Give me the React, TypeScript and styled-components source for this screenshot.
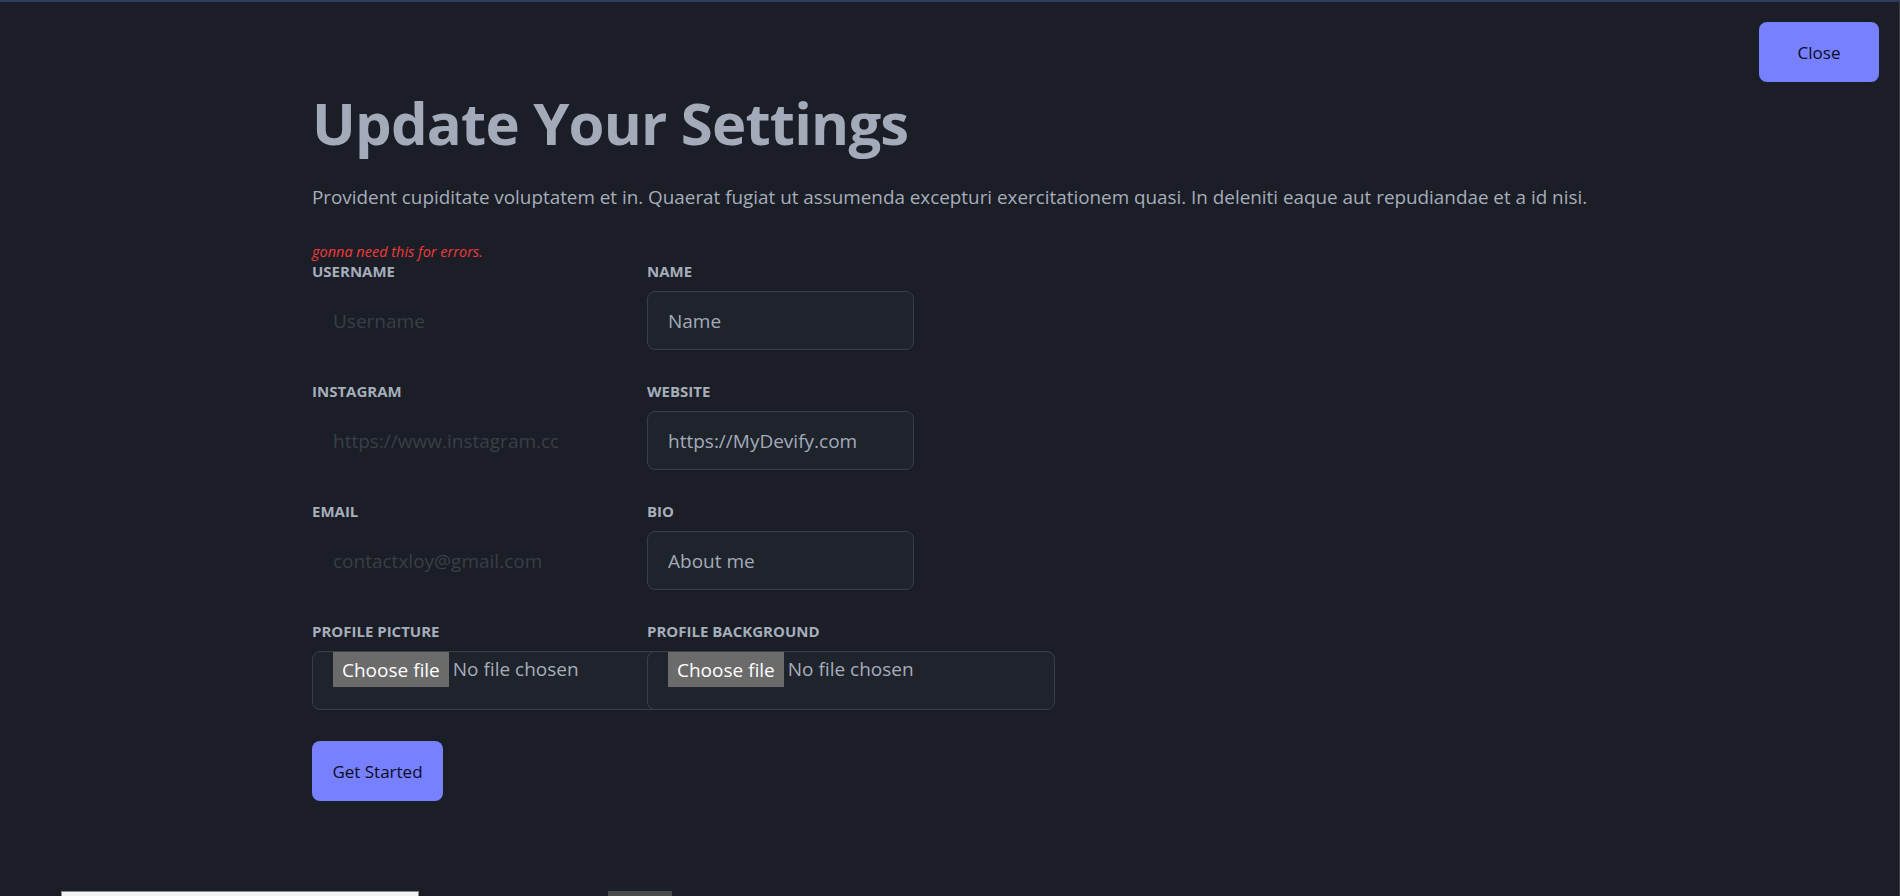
import React from "react";
import styled, { createGlobalStyle } from "styled-components";

const GlobalStyle = createGlobalStyle`
  * { box-sizing: border-box; }
  html, body { margin: 0; padding: 0; background: #1b1e26; }
  body { font-family: "Open Sans", "Noto Sans", sans-serif; color: #a6adbb; }
`;

const Page = styled.div`
  height: 896px;
  overflow: hidden;
  background: #1b1e26;
  border-top: 2px solid #2c3d61;
  border-right: 1px solid #3a3d44;
  display: flex;
  flex-direction: column;
`;

const TopBar = styled.div`
  display: flex;
  justify-content: flex-end;
  padding: 20px 20px 0;
`;

const PrimaryButton = styled.button<{ $w: number }>`
  width: ${(p) => p.$w}px;
  height: 60px;
  border: none;
  border-radius: 8px;
  background: #7780ff;
  color: #0b0c1f;
  font-family: "Open Sans", "Noto Sans", sans-serif;
  font-size: 17px;
  font-weight: 500;
  cursor: pointer;
  padding: 0;
`;

const Main = styled.main`
  margin: 11px 0 0 312px;
`;

const Title = styled.h1`
  margin: 0;
  font-size: 58px;
  line-height: 60px;
  font-weight: 700;
  color: #a3aab9;
  letter-spacing: -0.8px;
`;

const Lead = styled.p`
  margin: 30px 0 0;
  font-size: 18.85px;
  line-height: 28px;
  color: #a6adbb;
  white-space: nowrap;
`;

const ErrorText = styled.div`
  margin-top: 32px;
  font-size: 14.5px;
  line-height: 18px;
  font-style: italic;
  color: #f13b3b;
`;

const FormGrid = styled.div`
  display: grid;
  grid-template-columns: 335px 335px;
  row-gap: 31px;
`;

const Field = styled.div`
  display: flex;
  flex-direction: column;
  gap: 10px;
`;

const Label = styled.label`
  font-size: 15px;
  line-height: 20px;
  font-weight: 700;
  text-transform: uppercase;
  color: #a6adbb;
`;

const TextInput = styled.input<{ $ghost?: boolean }>`
  width: 267px;
  height: 59px;
  border-radius: 8px;
  font-family: "Open Sans", "Noto Sans", sans-serif;
  font-size: 19px;
  outline: none;
  padding: 0 20px;
  background: ${(p) => (p.$ghost ? "transparent" : "#1f232b")};
  border: 1px solid ${(p) => (p.$ghost ? "transparent" : "#3a3e47")};
  color: #a6adbb;
  &::placeholder {
    color: ${(p) => (p.$ghost ? "#393e47" : "#a3abba")};
  }
`;

const FileBox = styled.div`
  width: 408px;
  height: 59px;
  border: 1px solid #3a3e47;
  border-radius: 8px;
  background: #1f232b;
  display: flex;
  align-items: flex-start;
  padding-left: 20px;
  font-size: 19px;
`;

const ChooseButton = styled.span`
  height: 35px;
  padding: 0 9px;
  background: #6b6b6b;
  color: #ffffff;
  display: flex;
  align-items: center;
  margin-right: 4px;
`;

const NoFile = styled.span`
  line-height: 35px;
  color: #a6adbb;
`;

const SubmitRow = styled.div`
  margin-top: 31px;
`;

const Gallery = styled.div`
  margin-top: 90px;
  display: flex;
  align-items: flex-start;
  padding-left: 61px;
  gap: 189px;
`;

const Card = styled.div<{ $w: number; $bg: string; $border?: boolean }>`
  width: ${(p) => p.$w}px;
  height: 40px;
  background: ${(p) => p.$bg};
  border: ${(p) => (p.$border ? "1px solid #8a8a8a" : "none")};
  display: flex;
  justify-content: flex-end;
  padding: 4px 64px 0 0;
`;

const Mark = styled.span`
  width: 10px;
  height: 8px;
  background: #b7a49a;
`;

const fields = [
  { l: "Username", ph: "Username", ghost: true },
  { l: "Name", ph: "Name" },
  { l: "Instagram", ph: "https://www.instagram.com", ghost: true },
  { l: "Website", ph: "https://MyDevify.com" },
  { l: "Email", ph: "contactxloy@gmail.com", ghost: true },
  { l: "Bio", ph: "About me" },
];

export default function App() {
  return (
    <>
      <GlobalStyle />
      <Page>
        <TopBar>
          <PrimaryButton $w={120}>Close</PrimaryButton>
        </TopBar>
        <Main>
          <Title>Update Your Settings</Title>
          <Lead>
            Provident cupiditate voluptatem et in. Quaerat fugiat ut assumenda excepturi exercitationem quasi. In
            deleniti eaque aut repudiandae et a id nisi.
          </Lead>
          <ErrorText>gonna need this for errors.</ErrorText>
          <FormGrid>
            {fields.map((f) => (
              <Field key={f.l}>
                <Label>{f.l}</Label>
                <TextInput $ghost={f.ghost} placeholder={f.ph} />
              </Field>
            ))}
            <Field>
              <Label>Profile Picture</Label>
              <FileBox>
                <ChooseButton>Choose file</ChooseButton>
                <NoFile>No file chosen</NoFile>
              </FileBox>
            </Field>
            <Field>
              <Label>Profile Background</Label>
              <FileBox>
                <ChooseButton>Choose file</ChooseButton>
                <NoFile>No file chosen</NoFile>
              </FileBox>
            </Field>
          </FormGrid>
          <SubmitRow>
            <PrimaryButton $w={131}>Get Started</PrimaryButton>
          </SubmitRow>
        </Main>
        <Gallery>
          <Card $w={358} $bg="#f3f3f3" $border>
            <Mark />
          </Card>
          <Card $w={60} $bg="#4a4a4a" />
        </Gallery>
      </Page>
    </>
  );
}
